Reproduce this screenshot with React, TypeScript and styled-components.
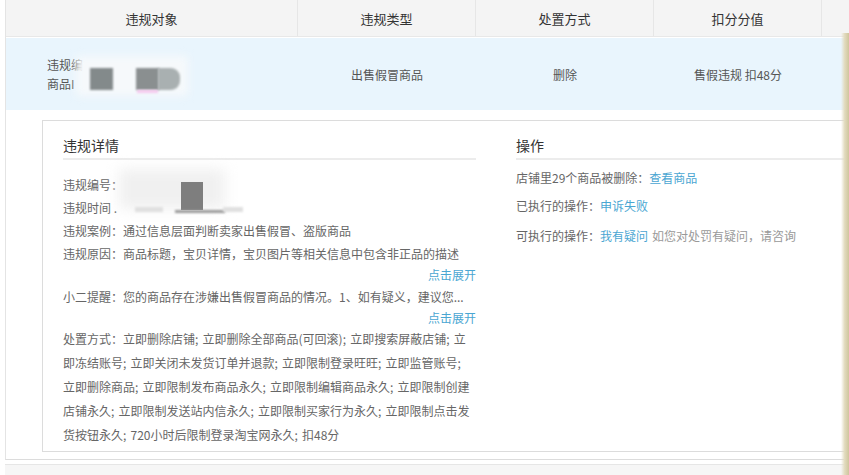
import React from "react";
import styled, { createGlobalStyle } from "styled-components";

// ---------------------------------------------------------------------------
// Global
// ---------------------------------------------------------------------------

const GlobalStyle = createGlobalStyle`
  html, body {
    margin: 0;
    padding: 0;
    background: #fff;
  }
  body {
    font-family: "Noto Sans CJK SC", "Noto Sans", "Liberation Sans", sans-serif;
    font-size: 12px;
    color: #666;
  }
`;

// ---------------------------------------------------------------------------
// Styled
// ---------------------------------------------------------------------------

const Page = styled.div`
  position: relative;
  width: 849px;
  height: 475px;
  overflow: hidden;
  background: #fff;
`;

const Table = styled.div`
  margin-left: 5px;
  border-left: 1px solid #e4e4e4;
  border-bottom: 1px solid #dcdcdc;
`;

const COLS = "292px 178px 178px 168px 1fr";

const HeaderRow = styled.div`
  display: grid;
  grid-template-columns: ${COLS};
  height: 36px;
  background: #f4f4f4;
  border-bottom: 1px solid #e8e8e8;
`;

const HeaderCell = styled.div<{ $last?: boolean }>`
  display: flex;
  align-items: center;
  justify-content: center;
  font-size: 13px;
  color: #333;
  border-right: ${(p) => (p.$last ? "none" : "1px solid #e6e6e6")};
`;

const RecordRow = styled.div`
  display: grid;
  grid-template-columns: ${COLS};
  height: 72px;
  margin-top: 1px;
  background: #e9f5fd;
`;

const Cell = styled.div<{ $align?: "left" | "center" }>`
  position: relative;
  display: flex;
  flex-direction: column;
  justify-content: center;
  align-items: ${(p) => (p.$align === "left" ? "flex-start" : "center")};
  padding-left: ${(p) => (p.$align === "left" ? "41px" : "0")};
  font-size: 12px;
  line-height: 19px;
  color: #555;
`;

// blurred redaction patches lying over the text
const Redact = styled.div`
  position: absolute;
  filter: blur(1.2px);
`;

const Details = styled.div`
  padding: 10px 0 7px 36px;
`;

const Card = styled.div`
  display: grid;
  grid-template-columns: 413px 1fr;
  column-gap: 40px;
  height: 332px;
  padding: 13px 0 0 20px;
  border: 1px solid #dcdcdc;
  border-right: none;
  background: #fff;
  box-sizing: border-box;
`;

const Section = styled.div`
  display: flex;
  flex-direction: column;
`;

const SectionTitle = styled.div`
  height: 22px;
  line-height: 22px;
  font-size: 14px;
  color: #333;
  padding-bottom: 2px;
  border-bottom: 2px solid #ececec;
`;

const InfoList = styled.div`
  position: relative;
  margin-top: 13px;
  display: flex;
  flex-direction: column;
`;

const InfoLine = styled.div<{ $truncate?: boolean }>`
  line-height: 23px;
  white-space: nowrap;
  overflow: ${(p) => (p.$truncate ? "hidden" : "visible")};
  text-overflow: ellipsis;
`;

const ExpandLink = styled.a`
  align-self: flex-end;
  line-height: 20px;
  color: #4aa6d2;
  text-decoration: none;
  cursor: pointer;
`;

const Paragraph = styled.div`
  line-height: 24px;
  margin-top: -1px;
  word-spacing: 1.5px;
  word-break: break-all;
`;

const ActionList = styled.div`
  margin-top: 6px;
  display: flex;
  flex-direction: column;
  gap: 5px;
`;

const ActionLine = styled.div<{ $extra?: boolean }>`
  line-height: 23px;
  margin-top: ${(p) => (p.$extra ? "2px" : "0")};
  white-space: nowrap;
`;

const Link = styled.a`
  color: #4aa6d2;
  text-decoration: none;
  cursor: pointer;
`;

const Hint = styled.span`
  color: #999;
  margin-left: 4px;
`;

const Footer = styled.div`
  margin-left: 5px;
  margin-top: 4px;
  height: 20px;
  background: #f6f6f6;
  border-top: 1px solid #e6e6e6;
`;

const EdgeShade = styled.div`
  position: absolute;
  top: 33px;
  right: 0;
  bottom: 0;
  width: 8px;
  background: linear-gradient(90deg, rgba(230, 224, 200, 0) 0%, #e2dbbf 45%, #cfc59d 100%);
`;

// ---------------------------------------------------------------------------
// Data
// ---------------------------------------------------------------------------

const columns = ["违规对象", "违规类型", "处置方式", "扣分分值", ""];

const penalties =
  "处置方式：立即删除店铺; 立即删除全部商品(可回滚); 立即搜索屏蔽店铺; 立即冻结账号; 立即关闭未发货订单并退款; 立即限制登录旺旺; 立即监管账号; 立即删除商品; 立即限制发布商品永久; 立即限制编辑商品永久; 立即限制创建店铺永久; 立即限制发送站内信永久; 立即限制买家行为永久; 立即限制点击发货按钮永久; 720小时后限制登录淘宝网永久; 扣48分";

// ---------------------------------------------------------------------------
// Component
// ---------------------------------------------------------------------------

export default function App() {
  return (
    <Page>
      <GlobalStyle />
      <Table>
        <HeaderRow>
          {columns.map((c, i) => (
            <HeaderCell key={i} $last={i === columns.length - 1}>
              {c}
            </HeaderCell>
          ))}
        </HeaderRow>

        <RecordRow>
          <Cell $align="left">
            <span>违规编</span>
            <span>商品I</span>
            <Redact style={{ left: 70, top: 18, width: 112, height: 40, background: "#f6f9fb", filter: "blur(4px)" }} />
            <Redact style={{ left: 84, top: 30, width: 23, height: 22, background: "#838a8b" }} />
            <Redact style={{ left: 130, top: 30, width: 23, height: 22, background: "#8a8f90" }} />
            <Redact style={{ left: 152, top: 30, width: 22, height: 22, background: "#a9b0b1", borderRadius: "0 9px 9px 0" }} />
            <Redact style={{ left: 131, top: 52, width: 21, height: 3, background: "#f6c8ee" }} />
          </Cell>
          <Cell>出售假冒商品</Cell>
          <Cell>删除</Cell>
          <Cell>售假违规 扣48分</Cell>
          <Cell />
        </RecordRow>

        <Details>
          <Card>
            <Section>
              <SectionTitle>违规详情</SectionTitle>
              <InfoList>
                <InfoLine>违规编号：</InfoLine>
                <InfoLine>违规时间 .</InfoLine>
                <Redact style={{ left: 56, top: -4, width: 106, height: 40, background: "#f0f0f0", filter: "blur(7px)" }} />
                <Redact style={{ left: 118, top: 9, width: 22, height: 28, background: "#7e7e7e", filter: "blur(0.5px)" }} />
                <Redact style={{ left: 72, top: 34, width: 28, height: 5, background: "#e0e0e0", filter: "blur(1px)" }} />
                <Redact style={{ left: 112, top: 37, width: 50, height: 3, background: "#9a9a9a", filter: "blur(1px)" }} />
                <Redact style={{ left: 160, top: 34, width: 20, height: 5, background: "#e0e0e0", filter: "blur(1px)" }} />
                <InfoLine>违规案例：通过信息层面判断卖家出售假冒、盗版商品</InfoLine>
                <InfoLine>违规原因：商品标题，宝贝详情，宝贝图片等相关信息中包含非正品的描述</InfoLine>
                <ExpandLink>点击展开</ExpandLink>
                <InfoLine $truncate>小二提醒：您的商品存在涉嫌出售假冒商品的情况。1、如有疑义，建议您...</InfoLine>
                <ExpandLink>点击展开</ExpandLink>
                <Paragraph>{penalties}</Paragraph>
              </InfoList>
            </Section>

            <Section>
              <SectionTitle>操作</SectionTitle>
              <ActionList>
                <ActionLine>
                  店铺里29个商品被删除：<Link>查看商品</Link>
                </ActionLine>
                <ActionLine>
                  已执行的操作：<Link>申诉失败</Link>
                </ActionLine>
                <ActionLine $extra>
                  可执行的操作：<Link>我有疑问</Link>
                  <Hint>如您对处罚有疑问，请咨询</Hint>
                </ActionLine>
              </ActionList>
            </Section>
          </Card>
        </Details>
      </Table>
      <Footer />
      <EdgeShade />
    </Page>
  );
}
